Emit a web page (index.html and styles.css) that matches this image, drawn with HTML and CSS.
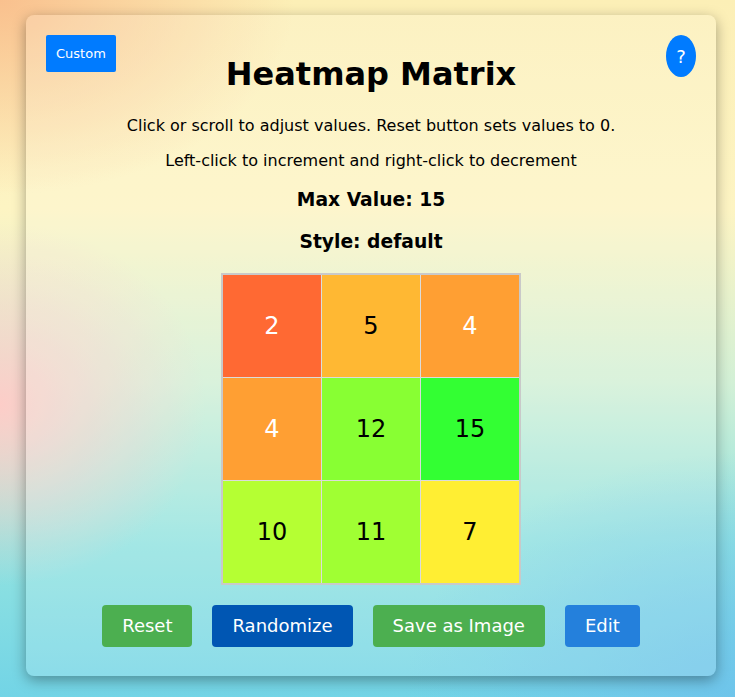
FILE: index.html
```html
<!DOCTYPE html>
<html lang="en">
<head>
<meta charset="utf-8">
<title>Heatmap Matrix</title>
<link rel="stylesheet" href="styles.css">
</head>
<body>
<div class="card">
  <button class="custom-btn">Custom</button>
  <button class="help-btn">?</button>
  <h1 class="title">Heatmap Matrix</h1>
  <p class="info">Click or scroll to adjust values. Reset button sets values to 0.</p>
  <p class="info">Left-click to increment and right-click to decrement</p>
  <h3 class="stat">Max Value: 15</h3>
  <h3 class="stat">Style: default</h3>
  <div class="grid">
    <div class="cell c-2 light">2</div>
    <div class="cell c-5">5</div>
    <div class="cell c-4 light">4</div>
    <div class="cell c-4 light">4</div>
    <div class="cell c-12">12</div>
    <div class="cell c-15">15</div>
    <div class="cell c-10">10</div>
    <div class="cell c-11">11</div>
    <div class="cell c-7">7</div>
  </div>
  <div class="actions">
    <button class="btn btn-green">Reset</button>
    <button class="btn btn-dark">Randomize</button>
    <button class="btn btn-green">Save as Image</button>
    <button class="btn btn-blue">Edit</button>
  </div>
</div>
</body>
</html>
```

FILE: styles.css
```css
html, body {
  margin: 0;
  padding: 0;
  height: 100%;
}

body {
  font-family: "DejaVu Sans", sans-serif;
  color: #000;
  background:
    radial-gradient(ellipse 40% 28% at 0% 0%, rgba(249, 190, 140, 0.95), rgba(249, 190, 140, 0) 100%),
    radial-gradient(ellipse 28% 26% at 0% 58%, rgba(253, 205, 200, 1), rgba(253, 205, 200, 0) 100%),
    radial-gradient(ellipse 45% 35% at 100% 100%, rgba(110, 195, 235, 0.9), rgba(110, 195, 235, 0) 100%),
    linear-gradient(to bottom, #fcefb6 0%, #fdf4c3 30%, #d2f0d6 55%, #92e3e0 78%, #72d4e6 100%);
  overflow: hidden;
}

.card {
  position: relative;
  box-sizing: border-box;
  width: 690px;
  height: 661px;
  margin: 15px 0 0 26px;
  padding: 20px;
  border-radius: 8px;
  background: rgba(255, 255, 255, 0.16);
  box-shadow: 0 4px 14px rgba(0, 0, 0, 0.35);
  text-align: center;
}

.custom-btn {
  position: absolute;
  top: 20px;
  left: 20px;
  padding: 11px 10px;
  border: none;
  border-radius: 2px;
  background: #007bff;
  color: #fff;
  font-family: "DejaVu Sans", sans-serif;
  font-size: 13px;
  line-height: 15px;
}

.help-btn {
  position: absolute;
  top: 20px;
  right: 20px;
  width: 30px;
  height: 42px;
  padding: 0;
  border: none;
  border-radius: 50%;
  background: #007bff;
  color: #fff;
  font-family: "DejaVu Sans", sans-serif;
  font-size: 18px;
}

.title {
  margin: 21px 0 0;
  font-size: 32px;
  line-height: 37px;
  font-weight: bold;
}

.info {
  margin: 0;
  font-size: 16px;
  line-height: 19px;
}

.title + .info {
  margin-top: 23px;
}

.info + .info {
  margin-top: 16px;
}

.stat {
  margin: 19px 0 0;
  font-size: 18.72px;
  line-height: 22px;
  font-weight: bold;
}

.stat + .stat {
  margin-top: 20px;
}

.grid {
  display: grid;
  grid-template-columns: repeat(3, 98px);
  grid-template-rows: repeat(3, 102px);
  gap: 1px;
  width: max-content;
  margin: 20px auto 0;
  border: 2px solid #c9c9c9;
  background: #dcdcdc;
}

.cell {
  display: flex;
  align-items: center;
  justify-content: center;
  font-size: 24px;
  color: #000;
}

.cell.light { color: #fff; }

.c-2 { background: #ff6933; }
.c-5 { background: #ffb833; }
.c-4 { background: #ff9f33; }
.c-12 { background: #88ff33; }
.c-15 { background: #33ff33; }
.c-10 { background: #b5ff33; }
.c-11 { background: #a0ff33; }
.c-7 { background: #ffee33; }

.actions {
  display: flex;
  justify-content: center;
  gap: 20px;
  margin-top: 20px;
}

.btn {
  padding: 10px 20px;
  border: none;
  border-radius: 4px;
  color: #fff;
  font-family: "DejaVu Sans", sans-serif;
  font-size: 18px;
  line-height: 22px;
}

.btn-green { background: #4caf50; }
.btn-dark { background: #0056b3; }
.btn-blue { background: #2480dc; }
```
